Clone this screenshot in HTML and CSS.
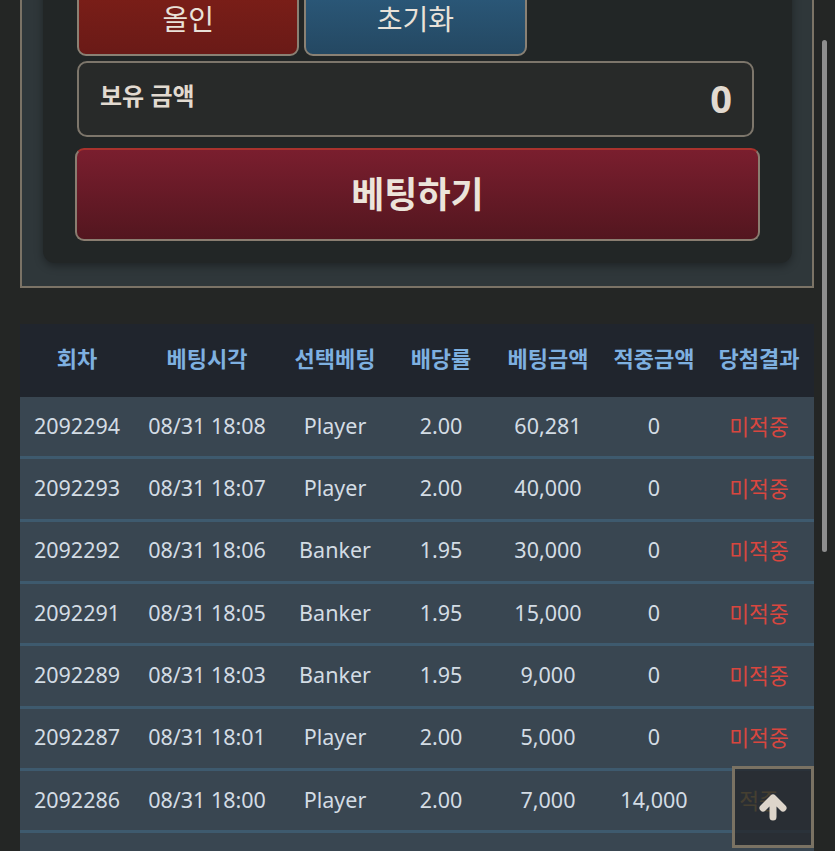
FILE: index.html
```html
<!DOCTYPE html>
<html lang="ko">
<head>
    <meta charset="UTF-8">
    <meta name="viewport" content="width=device-width, initial-scale=1.0">
    <title>베팅</title>
    <link rel="stylesheet" href="styles.css">
</head>
<body>
    <div class="wrap">
        <section class="bet-panel">
            <div class="bet-card">
                <div class="quick-btns">
                    <button class="quick-btn btn-allin">올인</button>
                    <button class="quick-btn btn-reset">초기화</button>
                </div>
                <div class="balance">
                    <span class="balance-label">보유 금액</span>
                    <span class="balance-value">0</span>
                </div>
                <button class="bet-btn">베팅하기</button>
            </div>
        </section>

        <table class="history">
            <colgroup>
                <col style="width:114px"><col style="width:146px"><col style="width:110px"><col style="width:102px"><col style="width:112px"><col style="width:100px"><col style="width:110px">
            </colgroup>
            <thead>
                <tr><th>회차</th><th>베팅시각</th><th>선택베팅</th><th>배당률</th><th>베팅금액</th><th>적중금액</th><th>당첨결과</th></tr>
            </thead>
            <tbody>
                <tr><td>2092294</td><td>08/31 18:08</td><td>Player</td><td>2.00</td><td>60,281</td><td>0</td><td class="miss">미적중</td></tr>
                <tr><td>2092293</td><td>08/31 18:07</td><td>Player</td><td>2.00</td><td>40,000</td><td>0</td><td class="miss">미적중</td></tr>
                <tr><td>2092292</td><td>08/31 18:06</td><td>Banker</td><td>1.95</td><td>30,000</td><td>0</td><td class="miss">미적중</td></tr>
                <tr><td>2092291</td><td>08/31 18:05</td><td>Banker</td><td>1.95</td><td>15,000</td><td>0</td><td class="miss">미적중</td></tr>
                <tr><td>2092289</td><td>08/31 18:03</td><td>Banker</td><td>1.95</td><td>9,000</td><td>0</td><td class="miss">미적중</td></tr>
                <tr><td>2092287</td><td>08/31 18:01</td><td>Player</td><td>2.00</td><td>5,000</td><td>0</td><td class="miss">미적중</td></tr>
                <tr><td>2092286</td><td>08/31 18:00</td><td>Player</td><td>2.00</td><td>7,000</td><td>14,000</td><td class="hit">적중</td></tr>
                <tr class="row-more"><td></td><td></td><td></td><td></td><td></td><td></td><td></td></tr>
            </tbody>
        </table>
    </div>

    <button class="to-top" aria-label="맨 위로">
        <svg width="28" height="28" viewBox="0 0 28 28">
            <path d="M14 24V6M4 15L14 5L24 15" fill="none" stroke="#ddd5ca" stroke-width="7" stroke-linecap="round" stroke-linejoin="round"/>
        </svg>
    </button>
    <div class="scroll-thumb"></div>
</body>
</html>
```

FILE: styles.css
```css
body {
    margin: 0;
    background: #242625;
    font-family: "Noto Sans", "Noto Sans CJK KR", sans-serif;
    overflow: hidden;
    height: 851px;
}
button {
    font-family: inherit;
    cursor: pointer;
}

/* page is shown scrolled down a little */
.wrap { margin: -64px 21px 0 20px; }

.bet-panel {
    background: #2f373a;
    border: 2px solid #7b7366;
    padding: 20px 20px 23px 21px;
}
.bet-card {
    background: #222626;
    border-radius: 12px;
    padding: 22px 38px 22px 34px;
    box-shadow: 0 3px 8px rgba(0, 0, 0, 0.35);
}
.quick-btns { display: grid; grid-template-columns: repeat(3, 1fr); gap: 5px; }
.quick-btn {
    height: 76px;
    border: 2px solid #8a8174;
    border-radius: 9px;
    color: #e9e2d9;
    font-size: 28px;
    padding: 0;
}
.btn-allin { background: linear-gradient(#7e1f18, #6a1a17); }
.btn-reset { background: linear-gradient(#2c5b7d, #244862); }

.balance {
    margin-top: 5px;
    height: 76px;
    box-sizing: border-box;
    border: 2px solid #7d766b;
    border-radius: 10px;
    background: #282a29;
    display: flex;
    align-items: center;
    justify-content: space-between;
    padding: 0 20px 0 21px;
    color: #e2dad0;
}
.balance-label { font-size: 24px; font-weight: bold; margin-bottom: 10px; }
.balance-value { font-size: 38px; font-weight: bold; margin-bottom: 2px; }

.bet-btn {
    display: block;
    width: calc(100% + 8px);
    margin: 11px -6px 0 -2px;
    height: 93px;
    border: 2px solid #8a7d70;
    border-top-color: #a8322d;
    border-radius: 9px;
    background: linear-gradient(#7a1e2e, #53161f);
    color: #ece4da;
    font-size: 36px;
    font-weight: bold;
    padding: 0 0 4px;
}

.history {
    width: 100%;
    margin-top: 36px;
    border-spacing: 0;
    table-layout: fixed;
}
.history th {
    box-sizing: border-box;
    height: 73px;
    padding: 0 0 8px;
    background: #20252d;
    color: #7eb0e0;
    font-size: 22px;
    font-weight: bold;
    white-space: nowrap;
}
.history td {
    box-sizing: border-box;
    height: 62.33px;
    padding: 0 0 3px;
    background: #394651;
    border-bottom: 3px solid #3e5a6e;
    color: #d3dce4;
    font-size: 21.5px;
    text-align: center;
    white-space: nowrap;
}
.history td.miss { color: #d8463f; }
.history td.hit { color: #d4a23c; }

.to-top {
    position: fixed;
    right: 21px;
    bottom: 3px;
    width: 82px;
    height: 82px;
    box-sizing: border-box;
    border: 3px solid #7a7263;
    background: rgba(38, 42, 46, 0.82);
    display: flex;
    align-items: center;
    justify-content: center;
    padding: 0;
}
.scroll-thumb {
    position: fixed;
    top: 40px;
    right: 8px;
    width: 5px;
    height: 512px;
    background: #8e8e8e;
    border-radius: 3px;
}
```
